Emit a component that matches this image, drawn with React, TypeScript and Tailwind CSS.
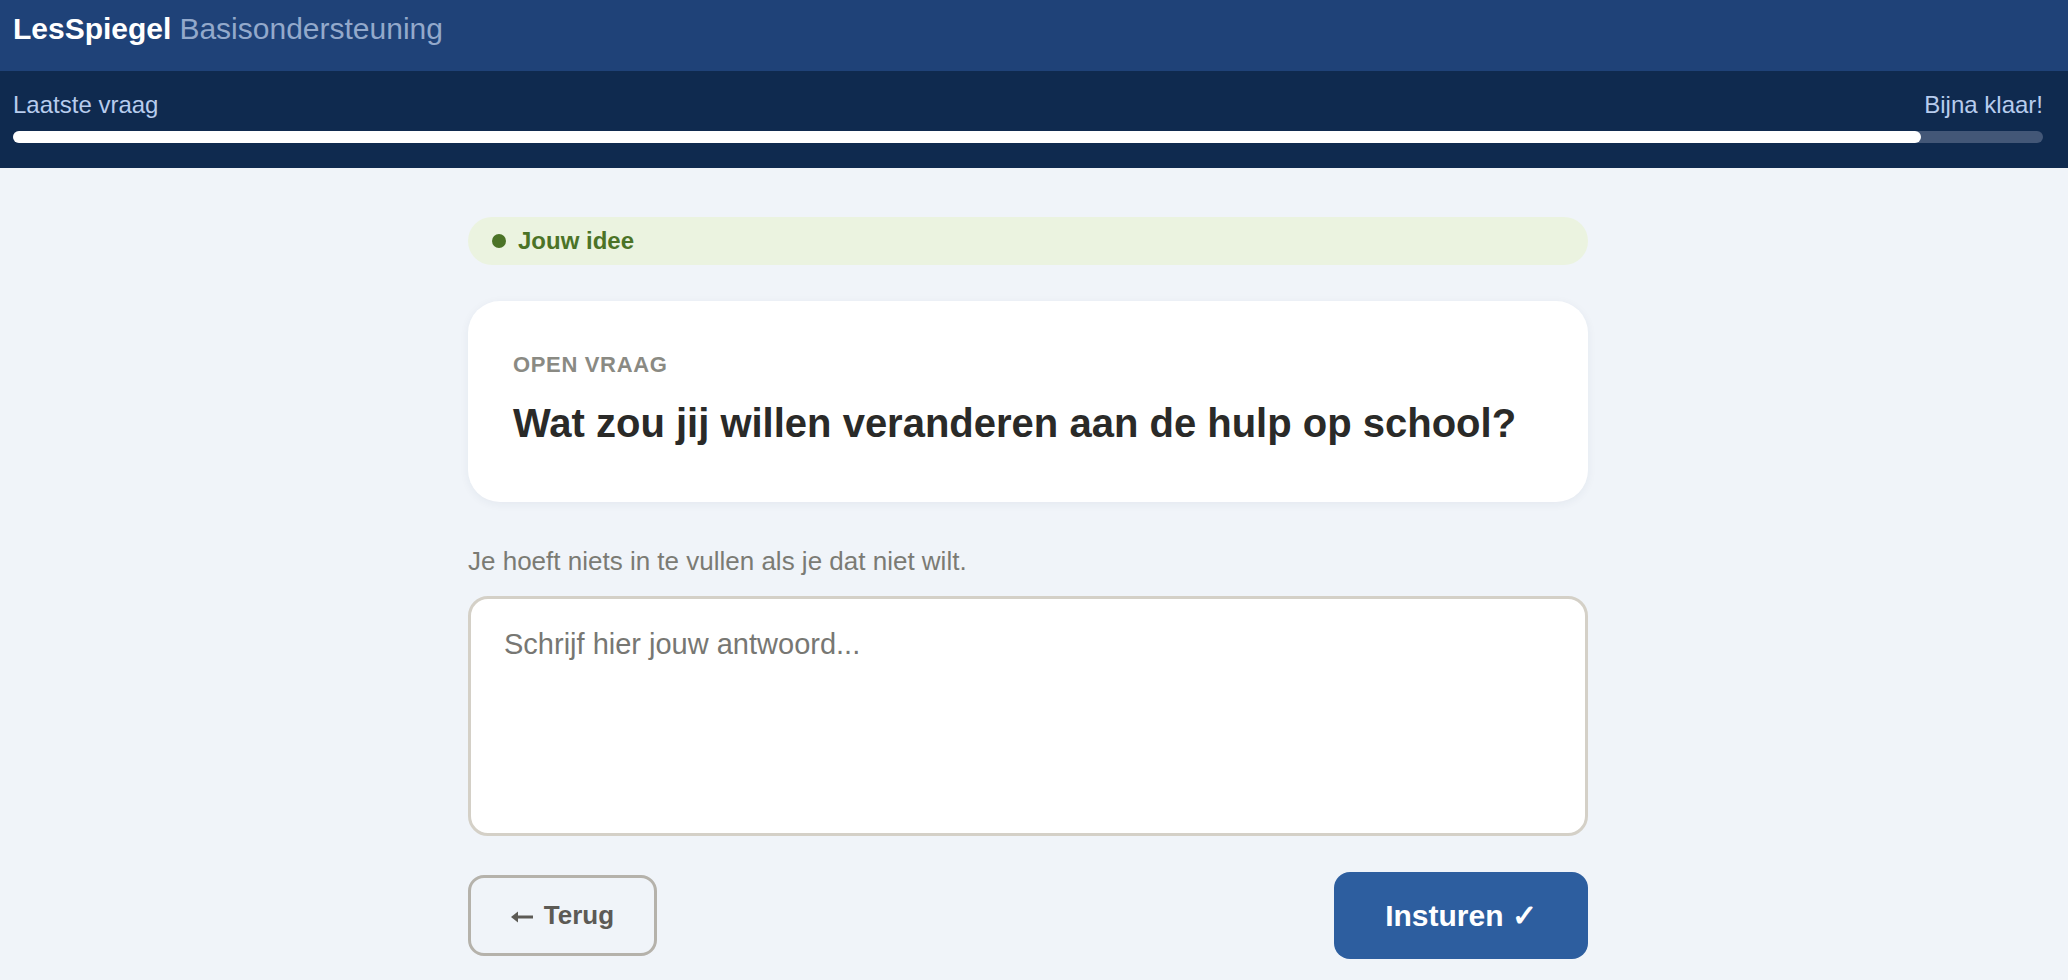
export default function App() {
  const progress = 94;

  return (
    <div className="min-h-screen bg-[#f0f4f9]" style={{ fontFamily: '"Liberation Sans", Arial, Helvetica, sans-serif' }}>
      {/* top bar */}
      <header className="h-[71px] bg-[#1f4278] pl-[13px] pt-[12px]">
        <div className="text-[30px] leading-[34px]">
          <span className="font-bold text-white">LesSpiegel</span>
          <span className="ml-[8px] text-[#93a9cb]">Basisondersteuning</span>
        </div>
      </header>

      {/* progress */}
      <div className="h-[97px] bg-[#0f2a4f] pl-[13px] pr-[25px] pt-[20px]">
        <div className="flex justify-between text-[24px] leading-[28px] text-[#b7cced]">
          <span>Laatste vraag</span>
          <span>Bijna klaar!</span>
        </div>
        <div className="mt-[12px] h-[12px] rounded-full bg-[#435777]">
          <div className="h-full rounded-full bg-white" style={{ width: `${progress}%` }} />
        </div>
      </div>

      <main className="pr-[12px] pt-[49px] pb-[40px]">
        <div className="mx-auto w-[1120px]">
          <div className="flex h-[48px] items-center gap-[12px] rounded-full bg-[#ebf3e0] pl-[24px]">
            <span className="h-[14px] w-[14px] rounded-full bg-[#4b7327]" />
            <span className="text-[24px] font-bold text-[#4b7327]">Jouw idee</span>
          </div>

          <section className="mt-[36px] rounded-[32px] bg-white px-[45px] pt-[51px] pb-[55px] shadow-[0_2px_10px_rgba(30,50,80,0.06)]">
            <div className="text-[22px] leading-[26px] font-bold uppercase tracking-[0.03em] text-[#8a8a83]">Open vraag</div>
            <h1 className="mt-[21px] text-[40px] leading-[48px] font-bold text-[#2a2a28]">
              Wat zou jij willen veranderen aan de hulp op school?
            </h1>
          </section>

          <p className="mt-[44px] text-[26px] leading-[30px] text-[#7b7b74]">Je hoeft niets in te vullen als je dat niet wilt.</p>

          <textarea
            className="mt-[20px] block h-[240px] w-full resize-none rounded-[20px] border-[3px] border-[#d4d0c7] bg-white pl-[33px] pr-[33px] pt-[24px] text-[29px] leading-[1.5] text-[#2a2a28] outline-none placeholder:text-[#777773]"
            placeholder="Schrijf hier jouw antwoord..."
          />

          <div className="mt-[36px] flex items-center justify-between">
            <button className="flex h-[81px] w-[189px] items-center justify-center gap-[10px] rounded-[16px] border-[3px] border-[#b5b2ab] text-[26px] font-bold text-[#5c5a55]">
              <svg width="23" height="14" viewBox="0 0 23 14" className="mt-[2px]" aria-hidden="true">
                <path d="M22 7H5" stroke="#5c5a55" strokeWidth="3" />
                <path d="M0 7L7 1.5V12.5Z" fill="#5c5a55" />
              </svg>
              <span>Terug</span>
            </button>
            <button className="flex h-[87px] w-[254px] items-center justify-center rounded-[16px] bg-[#2d5e9f] text-[30px] font-bold text-white">
              Insturen ✓
            </button>
          </div>
        </div>
      </main>
    </div>
  );
}
